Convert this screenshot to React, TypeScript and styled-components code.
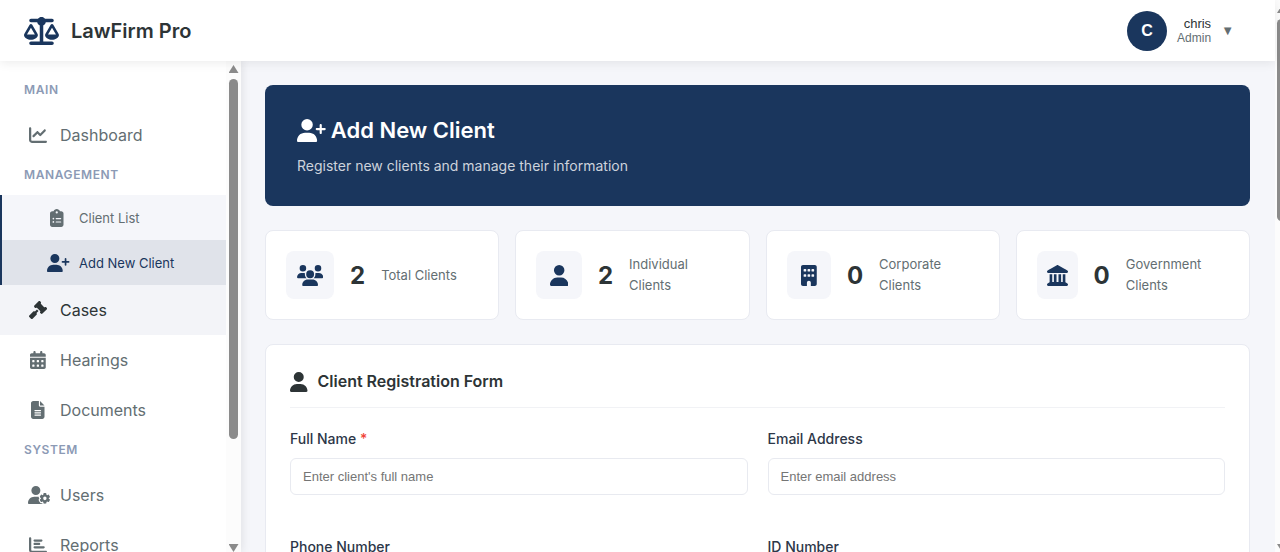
import React from 'react';
import styled, { createGlobalStyle, css } from 'styled-components';
import {
  FaScaleBalanced, FaChartLine, FaClipboardList, FaUserPlus, FaGavel, FaCalendarDays,
  FaFileLines, FaUserGear, FaChartBar, FaUsers, FaUser, FaBuilding, FaLandmark,
} from 'react-icons/fa6';

const navy = '#1a365d';
const ink = '#2d3436';
const muted = '#636e72';
const canvas = '#f5f6fa';

const GlobalStyle = createGlobalStyle`
  *, *::before, *::after { box-sizing: border-box; }
  body { margin: 0; background: ${canvas}; color: ${ink}; font-family: Inter, "Liberation Sans", sans-serif; }
  h1, h2, p { margin: 0; }
  svg { display: block; height: 1em; flex: none; }
  svg[viewBox^="0 0 640"] { width: 1.25em; }
  svg[viewBox^="0 0 448"] { width: 0.875em; }
  svg[viewBox^="0 0 384"] { width: 0.75em; }
`;

const Page = styled.div`
  display: flex;
  height: 100vh;
  overflow: hidden;
`;

const Shell = styled.div`
  flex: 1;
  min-width: 0;
  display: flex;
  flex-direction: column;
`;

const Header = styled.header`
  position: relative;
  z-index: 2;
  flex: none;
  display: flex;
  align-items: center;
  justify-content: space-between;
  height: 61px;
  padding: 0 41px 0 24px;
  background: #fff;
  box-shadow: 0 2px 10px rgba(0, 0, 0, 0.08);
`;

const Brand = styled.a`
  display: flex;
  align-items: center;
  gap: 12px;
  color: ${ink};
  font-size: 20px;
  font-weight: 600;
  text-decoration: none;
  svg { color: ${navy}; font-size: 28px; }
`;

const UserMenu = styled.button`
  display: flex;
  align-items: center;
  gap: 10px;
  padding: 0;
  border: 0;
  background: none;
  color: ${muted};
  font: 12px/14px "Liberation Sans", sans-serif;
  text-align: right;
`;

const Avatar = styled.span`
  display: grid;
  place-items: center;
  width: 40px;
  height: 40px;
  border-radius: 50%;
  background: ${navy};
  color: #fff;
  font-size: 16px;
  font-weight: 700;
`;

const UserText = styled.span`
  display: flex;
  flex-direction: column;
`;

const UserName = styled.span`
  color: ${ink};
  font-size: 13px;
`;

const Caret = styled.span`
  font-size: 13px;
`;

const Body = styled.div`
  flex: 1;
  min-height: 0;
  display: flex;
`;

const Sidebar = styled.aside`
  position: relative;
  z-index: 1;
  flex: none;
  display: flex;
  width: 241px;
  background: #fff;
  box-shadow: 2px 0 8px rgba(0, 0, 0, 0.08);
`;

const Nav = styled.nav`
  flex: 1;
  padding-top: 14px;
  overflow: hidden;
`;

const NavHeading = styled.div`
  padding: 8px 24px 13px;
  color: #8c9ab5;
  font-size: 12px;
  font-weight: 600;
  line-height: 14px;
  letter-spacing: 0.05em;
`;

const NavLink = styled.a<{ $hover?: boolean }>`
  display: flex;
  align-items: center;
  gap: 12px;
  height: 50px;
  padding-left: 28px;
  background: ${(p) => (p.$hover ? '#f3f4f8' : 'transparent')};
  color: ${(p) => (p.$hover ? ink : muted)};
  font-size: 16px;
  text-decoration: none;
`;

const NavIcon = styled.span<{ $overflow?: boolean }>`
  display: flex;
  justify-content: ${(p) => (p.$overflow ? 'flex-start' : 'center')};
  width: 20px;
  font-size: 18px;
`;

const SubMenu = styled.div`
  border-left: 2px solid ${navy};
  background: ${canvas};
`;

const SubLink = styled(NavLink)<{ $active?: boolean }>`
  height: 45px;
  padding: 0 0 0 45px;
  font-size: 13px;
  ${(p) => p.$active && css`
    background: #e0e3ea;
    color: ${navy};
  `}
`;

const ScrollTrack = styled.div<{ $width: number }>`
  flex: none;
  display: flex;
  flex-direction: column;
  align-items: ${(p) => (p.$width > 10 ? 'center' : 'flex-start')};
  width: ${(p) => p.$width}px;
  padding: ${(p) => (p.$width > 10 ? '4px 0 0' : '5px 0 0 2px')};
  overflow: hidden;
  background: #fcfcfc;
`;

const ScrollArrow = styled.span<{ $down?: boolean }>`
  flex: none;
  width: 10px;
  height: 8px;
  background: #8b8b8b;
  clip-path: ${(p) => (p.$down ? 'polygon(0 0, 100% 0, 50% 100%)' : 'polygon(50% 0, 100% 100%, 0 100%)')};
  ${(p) => p.$down && 'margin-top: auto;'}
`;

const ScrollThumb = styled.span<{ $share: string }>`
  flex: none;
  width: 9px;
  height: ${(p) => p.$share};
  margin-top: 6px;
  border-radius: 5px;
  background: #8b8b8b;
`;

const Main = styled.main`
  flex: 1;
  min-width: 0;
  display: flex;
  flex-direction: column;
  gap: 24px;
  padding: 24px 25px 0 24px;
  overflow: hidden;
`;

const Hero = styled.section`
  flex: none;
  padding: 31px 32px 29px;
  border-radius: 8px;
  background: ${navy};
  color: #fff;
`;

const HeroTitle = styled.h1`
  display: flex;
  align-items: center;
  gap: 5px;
  font-size: 22px;
  font-weight: 600;
  line-height: 28px;
  svg { font-size: 23px; }
`;

const HeroText = styled.p`
  margin-top: 11px;
  color: #cdd3dc;
  font-size: 14px;
  line-height: 22px;
`;

const Stats = styled.section`
  flex: none;
  display: grid;
  grid-template-columns: repeat(4, minmax(0, 1fr));
  gap: 16px;
`;

const cardFrame = css`
  border: 1px solid #e8eaf1;
  border-radius: 8px;
  background: #fff;
`;

const StatCard = styled.article`
  ${cardFrame}
  display: flex;
  align-items: center;
  gap: 16px;
  padding: 20px;
`;

const StatIcon = styled.span`
  display: flex;
  align-items: center;
  justify-content: center;
  width: 48px;
  height: 48px;
  border-radius: 8px;
  background: ${canvas};
  color: ${navy};
  font-size: 21px;
`;

const StatValue = styled.strong`
  font-size: 24px;
  font-weight: 700;
`;

const StatLabel = styled.span`
  color: ${muted};
  font-size: 13px;
  line-height: 21px;
`;

const FormCard = styled.form`
  ${cardFrame}
  flex: none;
  padding: 24px;
`;

const FormTitle = styled.h2`
  display: flex;
  align-items: center;
  gap: 10px;
  padding-bottom: 13px;
  margin-bottom: 19px;
  border-bottom: 1px solid #f1f2f5;
  font-size: 16px;
  font-weight: 600;
  line-height: 25px;
  svg { font-size: 20px; }
`;

const Fields = styled.div`
  display: grid;
  grid-template-columns: 1fr 1fr;
  gap: 40px 20px;
`;

const Field = styled.div`
  display: flex;
  flex-direction: column;
  gap: 8px;
`;

const Label = styled.label`
  color: #2d3748;
  font-size: 14px;
  font-weight: 500;
  line-height: 23px;
`;

const Required = styled.span`
  color: #f04438;
`;

const Input = styled.input`
  width: 100%;
  height: 37px;
  padding: 0 12px;
  border: 1px solid #e8eaf0;
  border-radius: 6px;
  background: #fff;
  color: ${ink};
  font: 13px "Liberation Sans", sans-serif;
  &::placeholder { color: #757575; }
`;

const stats = [
  { icon: <FaUsers />, value: 2, label: 'Total Clients' },
  { icon: <FaUser />, value: 2, label: 'Individual Clients' },
  { icon: <FaBuilding />, value: 0, label: 'Corporate Clients' },
  { icon: <FaLandmark />, value: 0, label: 'Government Clients' },
];

const fields = [
  { id: 'full-name', label: 'Full Name', placeholder: "Enter client's full name", type: 'text', required: true },
  { id: 'email', label: 'Email Address', placeholder: 'Enter email address', type: 'email' },
  { id: 'phone', label: 'Phone Number', placeholder: 'Enter phone number', type: 'tel' },
  { id: 'id-number', label: 'ID Number', placeholder: 'Enter ID number', type: 'text' },
];

export default function App() {
  return (
    <>
      <GlobalStyle />
      <Page>
        <Shell>
          <Header>
            <Brand href="#"><FaScaleBalanced />LawFirm Pro</Brand>
            <UserMenu type="button">
              <Avatar>C</Avatar>
              <UserText><UserName>chris</UserName>Admin</UserText>
              <Caret>▼</Caret>
            </UserMenu>
          </Header>
          <Body>
            <Sidebar>
              <Nav>
                <NavHeading>MAIN</NavHeading>
                <NavLink href="#"><NavIcon><FaChartLine /></NavIcon>Dashboard</NavLink>
                <NavHeading>MANAGEMENT</NavHeading>
                <SubMenu>
                  <SubLink href="#"><NavIcon><FaClipboardList /></NavIcon>Client List</SubLink>
                  <SubLink href="#" $active><NavIcon $overflow><FaUserPlus /></NavIcon>Add New Client</SubLink>
                </SubMenu>
                <NavLink href="#" $hover><NavIcon><FaGavel /></NavIcon>Cases</NavLink>
                <NavLink href="#"><NavIcon><FaCalendarDays /></NavIcon>Hearings</NavLink>
                <NavLink href="#"><NavIcon><FaFileLines /></NavIcon>Documents</NavLink>
                <NavHeading>SYSTEM</NavHeading>
                <NavLink href="#"><NavIcon $overflow><FaUserGear /></NavIcon>Users</NavLink>
                <NavLink href="#"><NavIcon><FaChartBar /></NavIcon>Reports</NavLink>
              </Nav>
              <ScrollTrack $width={15} aria-hidden>
                <ScrollArrow />
                <ScrollThumb $share="74%" />
                <ScrollArrow $down />
              </ScrollTrack>
            </Sidebar>
            <Main>
              <Hero>
                <HeroTitle><FaUserPlus />Add New Client</HeroTitle>
                <HeroText>Register new clients and manage their information</HeroText>
              </Hero>
              <Stats>
                {stats.map((s) => (
                  <StatCard key={s.label}>
                    <StatIcon>{s.icon}</StatIcon>
                    <StatValue>{s.value}</StatValue>
                    <StatLabel>{s.label}</StatLabel>
                  </StatCard>
                ))}
              </Stats>
              <FormCard>
                <FormTitle><FaUser />Client Registration Form</FormTitle>
                <Fields>
                  {fields.map((f) => (
                    <Field key={f.id}>
                      <Label htmlFor={f.id}>{f.label}{f.required && <Required> *</Required>}</Label>
                      <Input id={f.id} type={f.type} placeholder={f.placeholder} />
                    </Field>
                  ))}
                </Fields>
              </FormCard>
            </Main>
          </Body>
        </Shell>
        <ScrollTrack $width={5} aria-hidden>
          <ScrollArrow />
          <ScrollThumb $share="37%" />
          <ScrollArrow $down />
        </ScrollTrack>
      </Page>
    </>
  );
}
